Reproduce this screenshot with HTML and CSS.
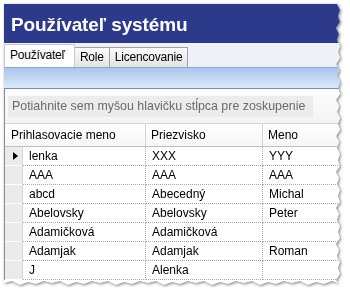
FILE: index.html
```html
<!DOCTYPE html>
<html lang="sk">
<head>
    <meta charset="UTF-8">
    <title>Používateľ systému</title>
    <link rel="stylesheet" href="styles.css">
</head>
<body>
    <div class="shot">
        <div class="window">
            <div class="title">Používateľ systému</div>

            <div class="tabs">
                <div class="tab active">Používateľ</div>
                <div class="tab">Role</div>
                <div class="tab">Licencovanie</div>
            </div>

            <div class="band"></div>

            <div class="content">
                <div class="group-panel">
                    <div class="group-box">Potiahnite sem myšou hlavičku stĺpca pre zoskupenie</div>
                </div>

                <div class="grid">
                    <div class="head head-first">Prihlasovacie meno</div>
                    <div class="head">Priezvisko</div>
                    <div class="head">Meno</div>

                    <div class="ind current"><span class="arrow"></span></div>
                    <div class="cell">lenka</div><div class="cell">XXX</div><div class="cell">YYY</div>

                    <div class="ind"></div>
                    <div class="cell">AAA</div><div class="cell">AAA</div><div class="cell">AAA</div>

                    <div class="ind"></div>
                    <div class="cell">abcd</div><div class="cell">Abecedný</div><div class="cell">Michal</div>

                    <div class="ind"></div>
                    <div class="cell">Abelovsky</div><div class="cell">Abelovsky</div><div class="cell">Peter</div>

                    <div class="ind"></div>
                    <div class="cell">Adamičková</div><div class="cell">Adamičková</div><div class="cell"></div>

                    <div class="ind"></div>
                    <div class="cell">Adamjak</div><div class="cell">Adamjak</div><div class="cell">Roman</div>

                    <div class="ind"></div>
                    <div class="cell">J</div><div class="cell">Alenka</div><div class="cell"></div>
                </div>
            </div>
        </div>
    </div>
</body>
</html>
```

FILE: styles.css
```css
* {
    box-sizing: border-box;
}

body {
    margin: 0;
    background: #ffffff;
    font-family: "Liberation Sans", Arial, sans-serif;
    color: #000;
}

/* snímka s roztrhnutým okrajom a tieňom */
.shot {
    margin: 4px 0 0 4px;
    width: 340px;
    height: 284px;
    filter: drop-shadow(1px 1px 1.5px rgba(0, 0, 0, 0.5));
}

.window {
    width: 100%;
    height: 100%;
    background: #fff;
    overflow: hidden;
    clip-path: polygon(0 0, 333px 0, 336px 6px, 334px 12px, 336px 18px, 332px 24px, 335px 30px,
        333px 36px, 336px 42px, 334px 48px, 336px 54px, 332px 60px, 335px 66px,
        333px 72px, 336px 78px, 334px 84px, 336px 90px, 332px 96px, 335px 102px,
        333px 108px, 336px 114px, 334px 120px, 336px 126px, 332px 132px, 335px 138px,
        333px 144px, 336px 150px, 334px 156px, 336px 162px, 332px 168px, 335px 174px,
        333px 180px, 336px 186px, 334px 192px, 336px 198px, 332px 204px, 335px 210px,
        333px 216px, 336px 222px, 334px 228px, 336px 234px, 332px 240px, 335px 246px,
        333px 252px, 336px 258px, 334px 264px, 336px 270px, 332px 276px, 334px 279px,
        328px 277px, 320px 280px, 312px 278px, 304px 281px, 296px 277px, 288px 279px,
        280px 277px, 272px 280px, 264px 278px, 256px 281px, 248px 277px, 240px 279px,
        232px 277px, 224px 280px, 216px 278px, 208px 281px, 200px 277px, 192px 279px,
        184px 277px, 176px 280px, 168px 278px, 160px 281px, 152px 277px, 144px 279px,
        136px 277px, 128px 280px, 120px 278px, 112px 281px, 104px 277px, 96px 279px,
        88px 277px, 80px 280px, 72px 278px, 64px 281px, 56px 277px, 48px 279px,
        40px 277px, 32px 280px, 24px 278px, 16px 281px, 8px 277px, 0 279px);
}

/* titulok */
.title {
    height: 39px;
    padding-left: 7px;
    background: #2d3a8c;
    color: #fff;
    font-size: 19px;
    font-weight: bold;
    line-height: 41px;
    letter-spacing: -0.1px;
    white-space: nowrap;
}

/* záložky */
.tabs {
    display: flex;
    align-items: flex-end;
    height: 24px;
    background: #eef2f8;
}

.tab {
    height: 20px;
    padding: 0 5px;
    margin-right: -1px;
    border: 1px solid #a3a3a3;
    border-bottom: none;
    background: linear-gradient(#fbfbfb, #e3e3e3);
    font-size: 12px;
    line-height: 19px;
    letter-spacing: -0.2px;
}

    .tab.active {
        position: relative;
        z-index: 1;
        height: 23px;
        padding: 0 9px 0 5px;
        border-color: #c8c8c8;
        background: #fff;
        line-height: 21px;
    }

.band {
    height: 22px;
    border-top: 1px solid #8ea8cc;
    border-bottom: 1px solid #6f8fb9;
    background: linear-gradient(#a9c5ee, #dbe8f8);
}

/* obsah mriežky */
.content {
    border-left: 1px solid #8c8c8c;
}

.group-panel {
    padding: 7px 0 6px 3px;
    background: linear-gradient(#fdfdfd, #f4f4f4);
}

.group-box {
    width: 305px;
    height: 21px;
    padding-left: 4px;
    background: #ececec;
    color: #6a6a6a;
    font-size: 12.4px;
    line-height: 21px;
    white-space: nowrap;
}

.grid {
    display: grid;
    grid-template-columns: 18px 123px 117px 1fr;
    font-size: 12px;
}

.head {
    height: 24px;
    padding-left: 5px;
    border-top: 1px solid #d4d4d4;
    border-right: 1px solid #d4d4d4;
    border-bottom: 1px solid #c0c0c0;
    background: linear-gradient(#ffffff, #f6f6f6);
    line-height: 22px;
    white-space: nowrap;
}

.head-first {
    grid-column: span 2;
    padding-left: 6px;
}

.ind {
    height: 19px;
    border-bottom: 1px solid #ffffff;
    border-right: 1px solid #d6d6d6;
    background: #ebebeb;
    display: flex;
    align-items: center;
    padding-left: 8px;
}

.arrow {
    width: 0;
    height: 0;
    border-top: 4px solid transparent;
    border-bottom: 4px solid transparent;
    border-left: 5px solid #000;
}

.cell {
    height: 19px;
    padding-left: 6px;
    border-right: 1px dotted #a8a8a8;
    border-bottom: 1px dotted #a8a8a8;
    line-height: 18px;
    white-space: nowrap;
    overflow: hidden;
}
```
